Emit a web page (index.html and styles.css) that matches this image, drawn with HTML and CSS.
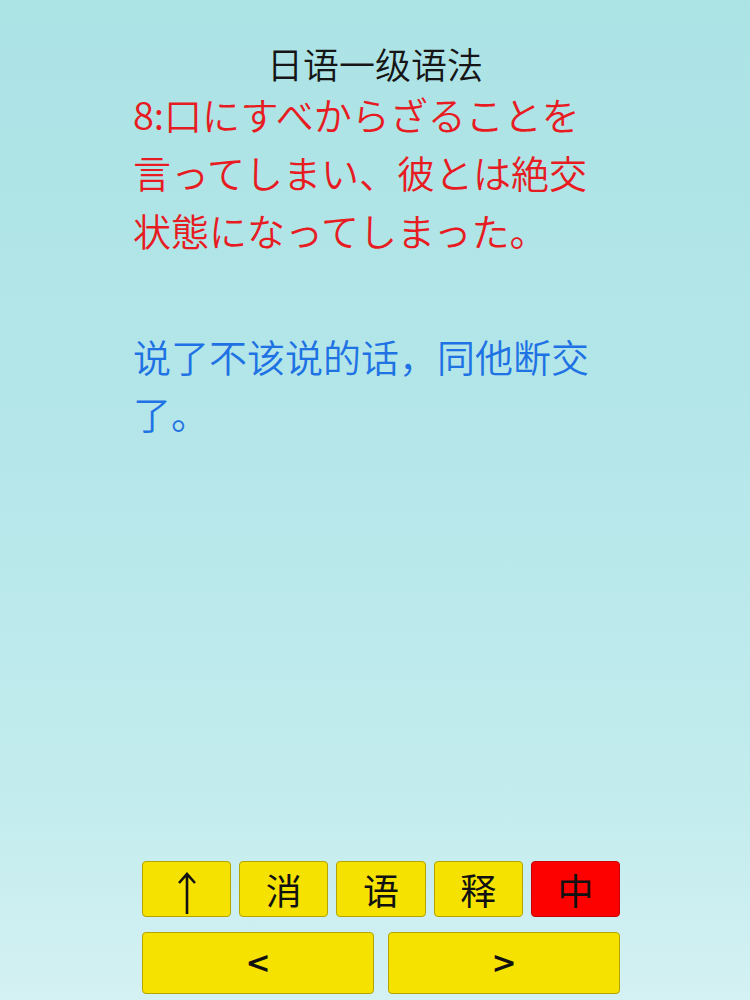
FILE: index.html
```html
<!DOCTYPE html>
<html lang="zh">
<head>
<meta charset="utf-8">
<title>日语一级语法</title>
<link rel="stylesheet" href="styles.css">
</head>
<body>
<div class="page">
  <h1 class="title">日语一级语法</h1>
  <div class="content">
    <p class="jp" lang="ja">8:口にすべからざることを言ってしまい、彼とは絶交状態になってしまった。</p>
    <p class="cn">说了不该说的话，同他断交了。</p>
  </div>
  <div class="controls">
    <div class="row row-top">
      <div class="btn btn-arrow"><svg class="arrow" width="22" height="44" viewBox="0 0 22 44" aria-label="↑"><path d="M11 3 V43 M3 12 L11 3 L19 12" fill="none" stroke="#111" stroke-width="2.6" stroke-linecap="butt" stroke-linejoin="miter"/></svg></div>
      <div class="btn">消</div>
      <div class="btn">语</div>
      <div class="btn">释</div>
      <div class="btn btn-red">中</div>
    </div>
    <div class="row row-bottom">
      <div class="btn btn-nav">&lt;</div>
      <div class="btn btn-nav">&gt;</div>
    </div>
  </div>
</div>
</body>
</html>
```
FILE: styles.css
```css
html, body {
  margin: 0;
  padding: 0;
}
body {
  background: linear-gradient(180deg, #ace3e5 0%, #b3e6e9 40%, #c3ecee 80%, #d4f1f3 100%);
  font-family: "Noto Sans CJK SC", "Noto Sans CJK JP", sans-serif;
  font-weight: 350;
}
.page {
  height: 1000px;
  display: flex;
  flex-direction: column;
  box-sizing: border-box;
}
.title {
  margin: 0;
  padding-top: 41px;
  font-size: 36px;
  font-weight: 350;
  line-height: 44px;
  text-align: center;
  color: #161616;
}
.content {
  padding-left: 133px;
  width: 460px;
}
.content p {
  margin: 0;
  font-size: 38px;
  line-height: 58px;
}
.jp {
  font-family: "Noto Sans CJK JP", sans-serif;
  color: #e61c22;
  margin-top: 0;
}
.content .cn {
  color: #1f72e4;
  margin-top: 68px;
  line-height: 57px;
}
.controls {
  margin-top: auto;
  padding: 0 130px 6px 142px;
  display: flex;
  flex-direction: column;
  gap: 15px;
}
.row {
  display: flex;
  gap: 8px;
}
.btn {
  flex: 1;
  box-sizing: border-box;
  background: #f5e200;
  border: 1px solid #b3a400;
  border-radius: 4px;
  color: #111;
  display: flex;
  align-items: center;
  justify-content: center;
  font-size: 36px;
  font-weight: 400;
  line-height: 1;
}
.row-top .btn {
  height: 56px;
}
.btn-arrow {
  align-items: flex-end;
}
.arrow {
  display: block;
  margin-bottom: 1px;
}
.row-bottom {
  gap: 14px;
}
.row-bottom .btn {
  height: 62px;
  font-family: "DejaVu Sans", sans-serif;
  font-size: 30px;
  font-weight: 700;
}
.btn-red {
  background: #fd0000;
  border-color: #c80000;
}
```
